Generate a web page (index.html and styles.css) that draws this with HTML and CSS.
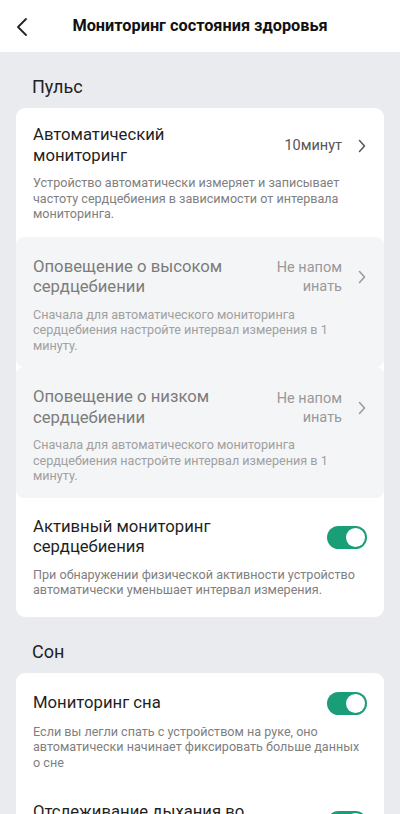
FILE: index.html
```html
<!DOCTYPE html>
<html lang="ru">
<head>
  <meta charset="UTF-8" />
  <meta name="viewport" content="width=device-width, initial-scale=1.0"/>
  <title>Мониторинг состояния здоровья</title>
  <link rel="stylesheet" href="styles.css">
</head>
<body>
  <div class="topbar">
    <svg class="back" width="12" height="20" viewBox="0 0 12 20">
      <path d="M10 2 L2 10 L10 18" fill="none" stroke="#222" stroke-width="1.8" stroke-linecap="round" stroke-linejoin="round"/>
    </svg>
    <h1>Мониторинг состояния здоровья</h1>
  </div>

  <div class="page">
    <h2 class="section">Пульс</h2>
    <div class="card">
      <div class="row first">
        <div class="head">
          <div class="title">Автоматический мониторинг</div>
          <div class="value">10минут</div>
          <svg class="chev" width="8" height="14" viewBox="0 0 8 14"><path d="M1.5 1.5 L6.5 7 L1.5 12.5" fill="none" stroke="#555" stroke-width="1.5" stroke-linecap="round" stroke-linejoin="round"/></svg>
        </div>
        <p class="desc">Устройство автоматически измеряет и записывает частоту сердцебиения в зависимости от интервала мониторинга.</p>
      </div>

      <div class="row off">
        <div class="head">
          <div class="title">Оповещение о высоком сердцебиении</div>
          <div class="value">Не напом<br>инать</div>
          <svg class="chev" width="8" height="14" viewBox="0 0 8 14"><path d="M1.5 1.5 L6.5 7 L1.5 12.5" fill="none" stroke="#999" stroke-width="1.5" stroke-linecap="round" stroke-linejoin="round"/></svg>
        </div>
        <p class="desc">Сначала для автоматического мониторинга сердцебиения настройте интервал измерения в 1 минуту.</p>
      </div>

      <div class="row off">
        <div class="head">
          <div class="title">Оповещение о низком сердцебиении</div>
          <div class="value">Не напом<br>инать</div>
          <svg class="chev" width="8" height="14" viewBox="0 0 8 14"><path d="M1.5 1.5 L6.5 7 L1.5 12.5" fill="none" stroke="#999" stroke-width="1.5" stroke-linecap="round" stroke-linejoin="round"/></svg>
        </div>
        <p class="desc">Сначала для автоматического мониторинга сердцебиения настройте интервал измерения в 1 минуту.</p>
      </div>

      <div class="row last">
        <div class="head">
          <div class="title">Активный мониторинг сердцебиения</div>
          <span class="toggle"></span>
        </div>
        <p class="desc">При обнаружении физической активности устройство автоматически уменьшает интервал измерения.</p>
      </div>
    </div>

    <h2 class="section">Сон</h2>
    <div class="card">
      <div class="row tight">
        <div class="head">
          <div class="title">Мониторинг сна</div>
          <span class="toggle"></span>
        </div>
        <p class="desc">Если вы легли спать с устройством на руке, оно автоматически начинает фиксировать больше данных о сне</p>
      </div>

      <div class="row">
        <div class="head">
          <div class="title">Отслеживание дыхания во сне</div>
          <span class="toggle"></span>
        </div>
        <p class="desc">Отслеживание качества дыхания во время сна.</p>
      </div>
    </div>
  </div>
</body>
</html>
```

FILE: styles.css
```css
* {
  box-sizing: border-box;
}

body {
  margin: 0;
  background-color: #eaebef;
  font-family: Roboto, "Noto Sans", "Liberation Sans", sans-serif;
  color: #1f1f1f;
}

.topbar {
  position: relative;
  height: 52px;
  background-color: #ffffff;
  display: flex;
  align-items: center;
  justify-content: center;
}

.back {
  position: absolute;
  left: 16px;
  top: 17px;
}

.topbar h1 {
  margin: 0 0 2px;
  font-size: 16.3px;
  font-weight: 700;
  color: #111;
}

.page {
  padding: 0 16px;
}

.section {
  margin: 0;
  padding: 23px 16px 9px;
  font-size: 18px;
  line-height: 24px;
  font-weight: 400;
  color: #222;
}

.card {
  background-color: #ffffff;
  border-radius: 9px;
  overflow: hidden;
}

.row {
  padding: 19px 17px 16px;
}

.row.first {
  padding-top: 17px;
  padding-bottom: 15px;
}

.row.last {
  padding-bottom: 19px;
}

.row.tight {
  padding-bottom: 13px;
}

.row.off {
  background-color: #f4f5f7;
  border-radius: 8px;
  padding-top: 20px;
  padding-bottom: 14px;
}

.head {
  display: flex;
  align-items: center;
}

.title {
  flex: 1;
  max-width: 222px;
  font-size: 16.7px;
  line-height: 20.5px;
  margin-right: auto;
}

.value {
  font-size: 14.5px;
  line-height: 19px;
  color: #555;
  text-align: right;
  margin-left: 10px;
}

.chev {
  margin-left: 16px;
  margin-right: 1px;
  flex-shrink: 0;
}

.off .title {
  color: #7c7c7c;
}

.off .value {
  color: #999;
}

.desc {
  margin: 9px 0 0;
  font-size: 12.6px;
  line-height: 15.5px;
  color: #808080;
}

.off .desc {
  color: #a0a0a0;
}

.toggle {
  position: relative;
  width: 40px;
  height: 23px;
  border-radius: 12px;
  background-color: #199e78;
  flex-shrink: 0;
}

.toggle::after {
  content: "";
  position: absolute;
  right: 2px;
  top: 2px;
  width: 19px;
  height: 19px;
  border-radius: 50%;
  background-color: #ffffff;
}
```
